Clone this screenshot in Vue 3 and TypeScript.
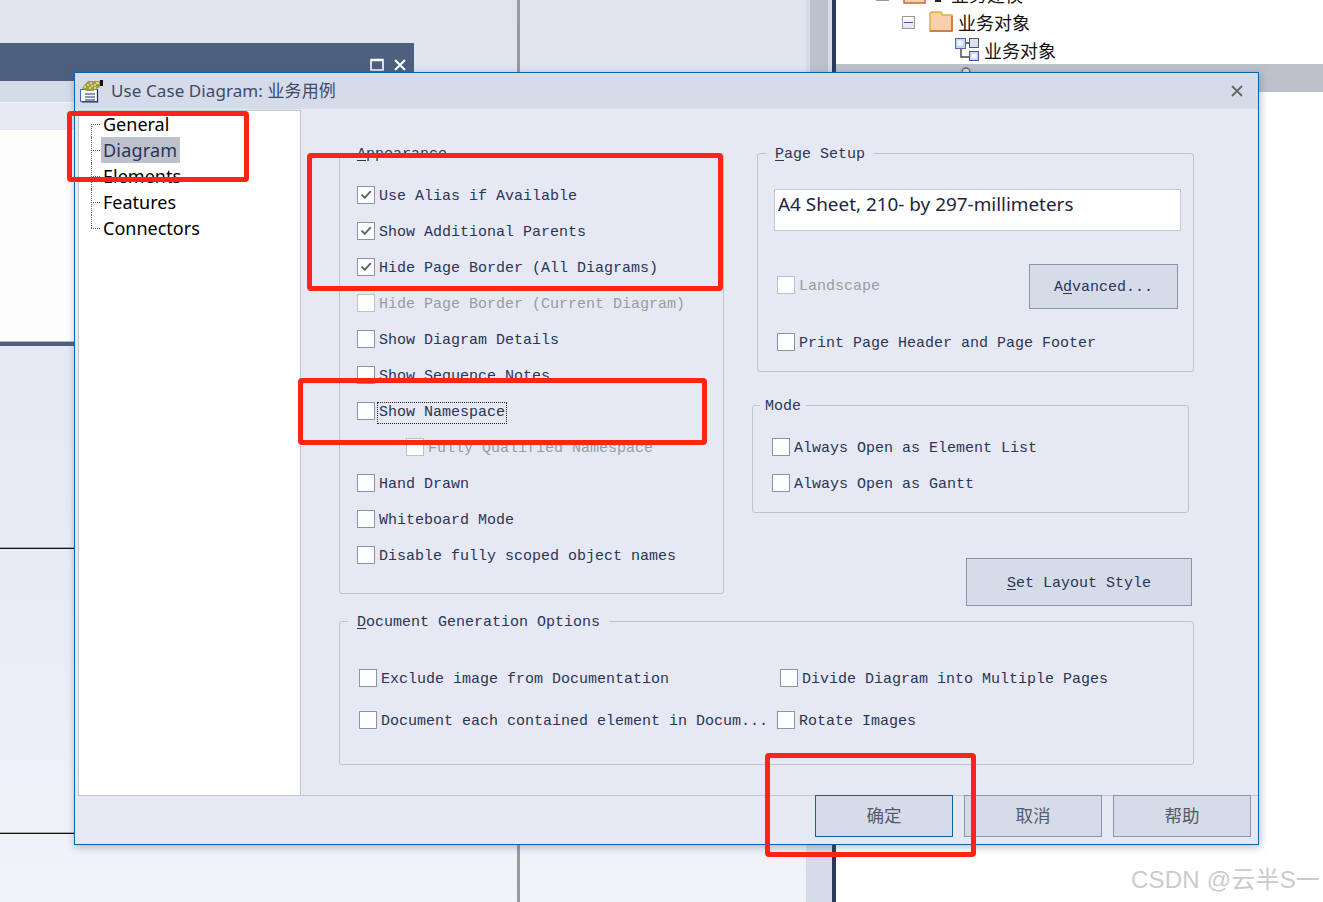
<script setup lang="ts">
interface Opt {
  label: string
  checked?: boolean
  disabled?: boolean
  focused?: boolean
  indented?: boolean
}

const appearance: Opt[] = [
  { label: 'Use Alias if Available', checked: true },
  { label: 'Show Additional Parents', checked: true },
  { label: 'Hide Page Border (All Diagrams)', checked: true },
  { label: 'Hide Page Border (Current Diagram)', disabled: true },
  { label: 'Show Diagram Details' },
  { label: 'Show Sequence Notes' },
  { label: 'Show Namespace', focused: true },
  { label: 'Fully Qualified Namespace', disabled: true, indented: true },
  { label: 'Hand Drawn' },
  { label: 'Whiteboard Mode' },
  { label: 'Disable fully scoped object names' },
]

const treeItems = ['General', 'Diagram', 'Elements', 'Features', 'Connectors']
const modes = ['Always Open as Element List', 'Always Open as Gantt']
const footerButtons = ['确定', '取消', '帮助']
</script>

<template>
  <div class="desktop">
    <div class="divider"></div>
    <div class="rule rule-a"></div>
    <div class="rule rule-b"></div>

    <div class="bg-window">
      <div class="bg-title">
        <svg class="bg-max" width="14" height="13" viewBox="0 0 14 13">
          <path d="M1 1.5H13V12H1Z M1 2.5H13" fill="none" stroke="#fff" stroke-width="1.6" />
        </svg>
        <svg class="bg-close" width="12" height="12" viewBox="0 0 12 12">
          <path d="M1 1L11 11M11 1L1 11" stroke="#fff" stroke-width="2" />
        </svg>
      </div>
      <div class="bg-tabs"></div>
      <div class="bg-tool"></div>
      <div class="bg-page"></div>
    </div>

    <div class="strip"><div class="strip-dark"></div></div>

    <div class="browser">
      <div class="pb-row pb-clipped">
        <span class="pb-plus"></span>
        <svg class="pb-pkg" width="23" height="20" viewBox="0 0 23 20">
          <path d="M1 19V1H22V19Z" fill="#f7cfa8" stroke="#c9683f" stroke-width="1.5" />
        </svg>
        <span class="pb-dash"></span>
        <span class="pb-text">业务建模</span>
      </div>
      <div class="pb-row pb-row-folder">
        <span class="pb-minus"><i></i></span>
        <svg class="pb-folder" width="24" height="21" viewBox="0 0 24 21">
          <path d="M1 20V3.5Q1 1 3 1H11Q13 1 13 3V4H23V20Z" fill="#f8d0ac" stroke="#e0b040" stroke-width="1.5" />
          <path d="M1 20H23V5" fill="none" stroke="#c9683f" stroke-width="1.5" />
        </svg>
        <span class="pb-text pb-folder-text">业务对象</span>
      </div>
      <div class="pb-row pb-row-diagram">
        <svg class="pb-diagram" width="24" height="24" viewBox="0 0 24 24">
          <path d="M10 5H15M6 11V19H15" fill="none" stroke="#444" stroke-width="1.4" />
          <rect x="0.5" y="0.5" width="10" height="10" fill="#c8d4f4" stroke="#5a66b8" />
          <rect x="2.5" y="2.5" width="5" height="5" fill="#f4f7ff" />
          <rect x="14.5" y="0.5" width="9" height="9" fill="#d8e2f4" stroke="#555" />
          <rect x="14.5" y="13.5" width="9" height="9" fill="#c8d4f4" stroke="#4a56b0" />
          <rect x="16.5" y="15.5" width="5" height="5" fill="#f4f7ff" />
        </svg>
        <span class="pb-text">业务对象</span>
      </div>
      <div class="pb-row pb-selected">
        <svg class="pb-actor" width="12" height="12" viewBox="0 0 12 12">
          <circle cx="6" cy="6" r="4" fill="#ddd" stroke="#666" stroke-width="1.5" />
        </svg>
      </div>
    </div>

    <section class="dialog">
      <header class="dlg-title">
        <svg class="dlg-icon" width="24" height="23" viewBox="0 0 24 23">
          <rect x="0.5" y="9.5" width="17" height="12" fill="#fff" stroke="#2f6fd0" />
          <path d="M17.5 10V22H2" fill="none" stroke="#1a2a60" stroke-width="1.2" />
          <path d="M5 14H15M5 17H15M5 20H15" stroke="#16306e" stroke-width="1.2" />
          <path d="M2 8L8 1H20V7L13 11H6Z" fill="#a09a44" />
          <path d="M4 7H6M7 5H9M10 3H12M11 6H13M14 5H16M9 8H11M14 8H16M16 3H19" stroke="#efe6a0" stroke-width="1.4" />
          <path d="M20 0H23V6H20Z" fill="#111" />
        </svg>
        <span class="dlg-caption">Use Case Diagram: 业务用例</span>
        <svg class="dlg-x" width="12" height="12" viewBox="0 0 12 12">
          <path d="M1 1L11 11M11 1L1 11" stroke="#666" stroke-width="1.8" />
        </svg>
      </header>

      <div class="dlg-main">
        <nav class="tree">
          <div
            v-for="(item, i) in treeItems"
            :key="item"
            class="tree-row"
            :class="{ first: i === 0, last: i === treeItems.length - 1 }"
          >
            <span class="tree-label" :class="{ selected: item === 'Diagram' }">{{ item }}</span>
          </div>
        </nav>

        <div class="pane">
          <div class="pane-top">
            <div class="group appearance">
              <span class="legend"><u>A</u>ppearance</span>
              <div class="stack">
                <label
                  v-for="o in appearance"
                  :key="o.label"
                  class="chk"
                  :class="{ off: o.disabled, indented: o.indented }"
                >
                  <span class="box">
                    <svg v-if="o.checked" width="16" height="16" viewBox="0 0 16 16">
                      <path d="M3.5 7.6L6.8 10.8L12.8 4.2" fill="none" stroke="#666" stroke-width="2" />
                    </svg>
                  </span>
                  <span class="chk-text" :class="{ focused: o.focused }">{{ o.label }}</span>
                </label>
              </div>
            </div>

            <div class="right-col">
              <div class="group page-setup">
                <span class="legend"><u>P</u>age Setup</span>
                <div class="paper">A4 Sheet, 210- by 297-millimeters</div>
                <div class="landscape-row">
                  <label class="chk off landscape">
                    <span class="box"></span>
                    <span class="chk-text">Landscape</span>
                  </label>
                  <button class="btn advanced" type="button">A<u>d</u>vanced...</button>
                </div>
                <label class="chk print-row">
                  <span class="box"></span>
                  <span class="chk-text">Print Page Header and Page Footer</span>
                </label>
              </div>

              <div class="group mode">
                <span class="legend legend-tight">Mode</span>
                <div class="stack">
                  <label v-for="m in modes" :key="m" class="chk">
                    <span class="box"></span>
                    <span class="chk-text">{{ m }}</span>
                  </label>
                </div>
              </div>

              <button class="btn layout-style" type="button"><u>S</u>et Layout Style</button>
            </div>
          </div>

          <div class="group doc">
            <span class="legend"><u>D</u>ocument Generation Options</span>
            <div class="doc-grid">
              <label class="chk">
                <span class="box"></span>
                <span class="chk-text">Exclude image from Documentation</span>
              </label>
              <label class="chk">
                <span class="box"></span>
                <span class="chk-text">Divide Diagram into Multiple Pages</span>
              </label>
              <label class="chk">
                <span class="box"></span>
                <span class="chk-text">Document each contained element in Docum...</span>
              </label>
              <label class="chk nudge">
                <span class="box"></span>
                <span class="chk-text">Rotate Images</span>
              </label>
            </div>
          </div>
        </div>
      </div>

      <footer class="dlg-footer">
        <button
          v-for="(b, i) in footerButtons"
          :key="b"
          class="foot-btn"
          :class="{ primary: i === 0 }"
          type="button"
        >{{ b }}</button>
      </footer>
    </section>

    <div class="mark mark-1"></div>
    <div class="mark mark-2"></div>
    <div class="mark mark-3"></div>
    <div class="mark mark-4"></div>

    <div class="watermark">CSDN @云半S一</div>
  </div>
</template>

<style>
html,
body {
  margin: 0;
  padding: 0;
  background: #fff;
}
</style>

<style scoped>
.desktop {
  position: relative;
  width: 1323px;
  height: 902px;
  overflow: hidden;
  background: linear-gradient(180deg, #dfe4ef 0%, #e9edf6 70%, #f1f3f9 100%);
  font-family: "Liberation Mono", "Noto Sans CJK SC", monospace;
}

.divider {
  position: absolute;
  left: 517px;
  top: 0;
  width: 3px;
  height: 902px;
  background: #9a9a9a;
}

.rule {
  position: absolute;
  left: 0;
  width: 300px;
  height: 1px;
  background: #111;
  box-shadow: 0 -1px 0 #aaa;
}
.rule-a { top: 548px; }
.rule-b { top: 833px; }

.bg-window {
  position: absolute;
  left: 0;
  top: 43px;
  width: 414px;
  display: flex;
  flex-direction: column;
}
.bg-title {
  height: 38px;
  background: #4d6080;
  display: flex;
  justify-content: flex-end;
  align-items: flex-end;
  gap: 10px;
  padding: 0 8px 10px 0;
  box-sizing: border-box;
}
.bg-tabs {
  height: 21px;
  background: #d5dbe9;
  border-bottom: 1px solid #f4f6fb;
}
.bg-tool {
  height: 27px;
  background: #e6e9f3;
}
.bg-page {
  height: 212px;
  background: #fdfdfe;
  border-bottom: 4px solid #4d6080;
  box-shadow: inset 0 -1px 0 #bbb;
}

.strip {
  position: absolute;
  left: 806px;
  top: 0;
  width: 26px;
  height: 902px;
  background: #d5dbe9;
  border-right: 4px solid #2a3a5c;
}
.strip-dark {
  margin-left: 4px;
  width: 18px;
  height: 92px;
  background: #bcc1cb;
}

.browser {
  position: absolute;
  left: 836px;
  top: 0;
  width: 487px;
  height: 902px;
  background: #fff;
  font-family: "Noto Sans CJK SC", sans-serif;
  font-size: 18px;
  color: #111;
}
.pb-row {
  height: 28px;
  display: flex;
  align-items: center;
}
.pb-clipped {
  margin-top: -20px;
  padding-left: 40px;
}
.pb-plus {
  width: 13px;
  height: 13px;
  border: 1px solid #999;
  box-sizing: border-box;
  flex: none;
}
.pb-pkg {
  margin-left: 14px;
  flex: none;
}
.pb-dash {
  width: 6px;
  height: 2px;
  margin: 14px 10px 0 9px;
  background: #222;
  flex: none;
}
.pb-text {
  line-height: 28px;
}
.pb-row-folder {
  padding-left: 66px;
}
.pb-minus {
  width: 13px;
  height: 13px;
  border: 1px solid #999;
  box-sizing: border-box;
  background: linear-gradient(#fff, #e4e4ea);
  display: flex;
  align-items: center;
  justify-content: center;
  flex: none;
}
.pb-minus i {
  width: 9px;
  height: 1px;
  background: #3a55a5;
}
.pb-folder {
  margin: 0 0 2px 14px;
  flex: none;
}
.pb-folder-text {
  margin-left: 5px;
}
.pb-row-diagram {
  padding-left: 119px;
}
.pb-diagram {
  flex: none;
  margin-right: 5px;
}
.pb-selected {
  background: #bcc1cb;
  padding-left: 124px;
  align-items: flex-start;
}
.pb-actor {
  margin-top: 2px;
}

.dialog {
  position: absolute;
  left: 74px;
  top: 72px;
  width: 1185px;
  height: 773px;
  box-sizing: border-box;
  border: 1px solid #0a65a8;
  background: #e6e9f3;
  box-shadow: 1px 2px 8px rgba(60, 85, 130, 0.4);
  display: flex;
  flex-direction: column;
  font-size: 15px;
  color: #2a3556;
}

.dlg-title {
  height: 36px;
  flex: none;
  background: #d5dbe9;
  display: flex;
  align-items: center;
  padding-left: 5px;
}
.dlg-icon {
  flex: none;
}
.dlg-caption {
  margin: 0 0 3px 7px;
  font-family: "Noto Sans", "Noto Sans CJK SC", sans-serif;
  font-size: 17px;
  letter-spacing: 0.09px;
  color: #3c4a68;
  flex: 1;
}
.dlg-x {
  margin-right: 15px;
}

.dlg-main {
  height: 686px;
  flex: none;
  display: flex;
}

.tree {
  flex: none;
  width: 223px;
  height: 685px;
  margin: 1px 0 0 3px;
  box-sizing: border-box;
  background: #fff;
  border: 1px solid #c2c6d0;
  border-bottom: 0;
  font-family: "Noto Sans", sans-serif;
  font-size: 18px;
  color: #000;
}
.tree-row {
  position: relative;
  height: 26px;
  padding-left: 22px;
  line-height: 26px;
}
.tree-row::before {
  content: "";
  position: absolute;
  left: 12px;
  top: 13px;
  width: 9px;
  border-top: 1px dotted #666;
}
.tree-row::after {
  content: "";
  position: absolute;
  left: 12px;
  top: 0;
  height: 26px;
  border-left: 1px dotted #666;
}
.tree-row.first::after {
  top: 13px;
  height: 13px;
}
.tree-row.last::after {
  height: 13px;
}
.tree-label {
  display: inline-block;
  height: 26px;
  padding: 0 2px;
}
.tree-label.selected {
  background: #bcc1cb;
  color: #2a3556;
  letter-spacing: 0.2px;
  padding-right: 3px;
}

.pane {
  flex: 1;
  min-width: 0;
  padding: 44px 0 0 38px;
  box-sizing: border-box;
}
.pane-top {
  display: flex;
  align-items: flex-start;
  gap: 28px;
}

.group {
  position: relative;
  box-sizing: border-box;
  border: 1px solid #bfc3cf;
  border-radius: 3px;
}
.legend {
  position: absolute;
  top: -10px;
  left: 8px;
  padding: 2px 9px 0;
  line-height: 18px;
  height: 18px;
  background: #e6e9f3;
  white-space: pre;
}
.legend-tight {
  left: 7px;
  padding: 2px 5px 0;
}
u {
  text-underline-offset: 2px;
}

.stack {
  display: flex;
  flex-direction: column;
  gap: 18px;
}

.chk {
  display: flex;
  align-items: center;
  gap: 4px;
  height: 18px;
  white-space: pre;
}
.box {
  flex: none;
  width: 18px;
  height: 18px;
  box-sizing: border-box;
  background: #fff;
  border: 1px solid #8a93a9;
  display: flex;
  align-items: center;
  justify-content: center;
}
.chk-text {
  line-height: 18px;
  padding-top: 4px;
}
.focused {
  position: relative;
}
.focused::after {
  content: "";
  position: absolute;
  left: -1px;
  right: -1px;
  top: 3px;
  bottom: -1px;
  outline: 1px dotted #222;
}
.off {
  color: #9a9ba2;
}
.off .box {
  border-color: #bcc0cc;
}
.indented {
  margin-left: 49px;
}

.appearance {
  flex: none;
  width: 385px;
  padding: 32px 0 29px 17px;
}

.right-col {
  flex: none;
  width: 442px;
  display: flex;
  flex-direction: column;
  align-items: flex-start;
}

.page-setup {
  margin-left: 5px;
  width: 437px;
  padding: 35px 0 20px 16px;
}
.paper {
  box-sizing: border-box;
  width: 407px;
  height: 42px;
  background: #fff;
  border: 1px solid #c5c9d6;
  padding-left: 3px;
  font-family: "Noto Sans", sans-serif;
  font-size: 18.9px;
  line-height: 28px;
  color: #1d2540;
}
.landscape-row {
  margin: 33px 0 0 3px;
  width: 401px;
  display: flex;
  align-items: center;
  justify-content: space-between;
}
.landscape {
  margin-bottom: 3px;
}
.print-row {
  margin: 24px 0 0 3px;
}

.btn {
  font: inherit;
  color: inherit;
  background: #d5dbe9;
  border: 1px solid #8a93a9;
  border-radius: 0;
  padding: 2px 0 0;
  box-sizing: border-box;
}
.advanced {
  width: 149px;
  height: 45px;
}
.layout-style {
  margin: 45px 0 0 214px;
  width: 226px;
  height: 48px;
}

.mode {
  margin-top: 33px;
  width: 437px;
  padding: 32px 0 20px 19px;
}

.doc {
  margin-top: 15px;
  width: 855px;
  padding: 47px 0 35px 19px;
}
.doc-grid {
  display: grid;
  grid-template-columns: 421px 1fr;
  row-gap: 24px;
}
.nudge {
  margin-left: -3px;
}

.dlg-footer {
  flex: 1;
  margin-left: 3px;
  box-sizing: border-box;
  border-top: 1px solid #c2c6d0;
  display: flex;
  justify-content: flex-end;
  align-items: flex-start;
  gap: 11px;
  padding-right: 7px;
}
.foot-btn {
  width: 138px;
  height: 42px;
  margin-top: -1px;
  box-sizing: border-box;
  background: #d5dbe9;
  border: 1px solid #8a93a9;
  border-radius: 0;
  padding: 0 0 4px;
  font-family: "Noto Sans CJK SC", sans-serif;
  font-size: 17.5px;
  color: #555a66;
}
.foot-btn.primary {
  border-color: #0a65a8;
}

.mark {
  position: absolute;
  box-sizing: border-box;
  border: 5px solid #ff2415;
  border-radius: 4px;
}
.mark-1 { left: 67px; top: 111px; width: 182px; height: 71px; }
.mark-2 { left: 307px; top: 153px; width: 416px; height: 138px; }
.mark-3 { left: 298px; top: 378px; width: 409px; height: 67px; }
.mark-4 { left: 765px; top: 753px; width: 211px; height: 104px; }

.watermark {
  position: absolute;
  left: 1131px;
  top: 864px;
  font-family: "Liberation Sans", "Noto Sans CJK SC", sans-serif;
  font-size: 24px;
  letter-spacing: 0.2px;
  line-height: 32px;
  white-space: nowrap;
  color: #cbcbcb;
  text-shadow: 0 0 2px #fff;
}
</style>
